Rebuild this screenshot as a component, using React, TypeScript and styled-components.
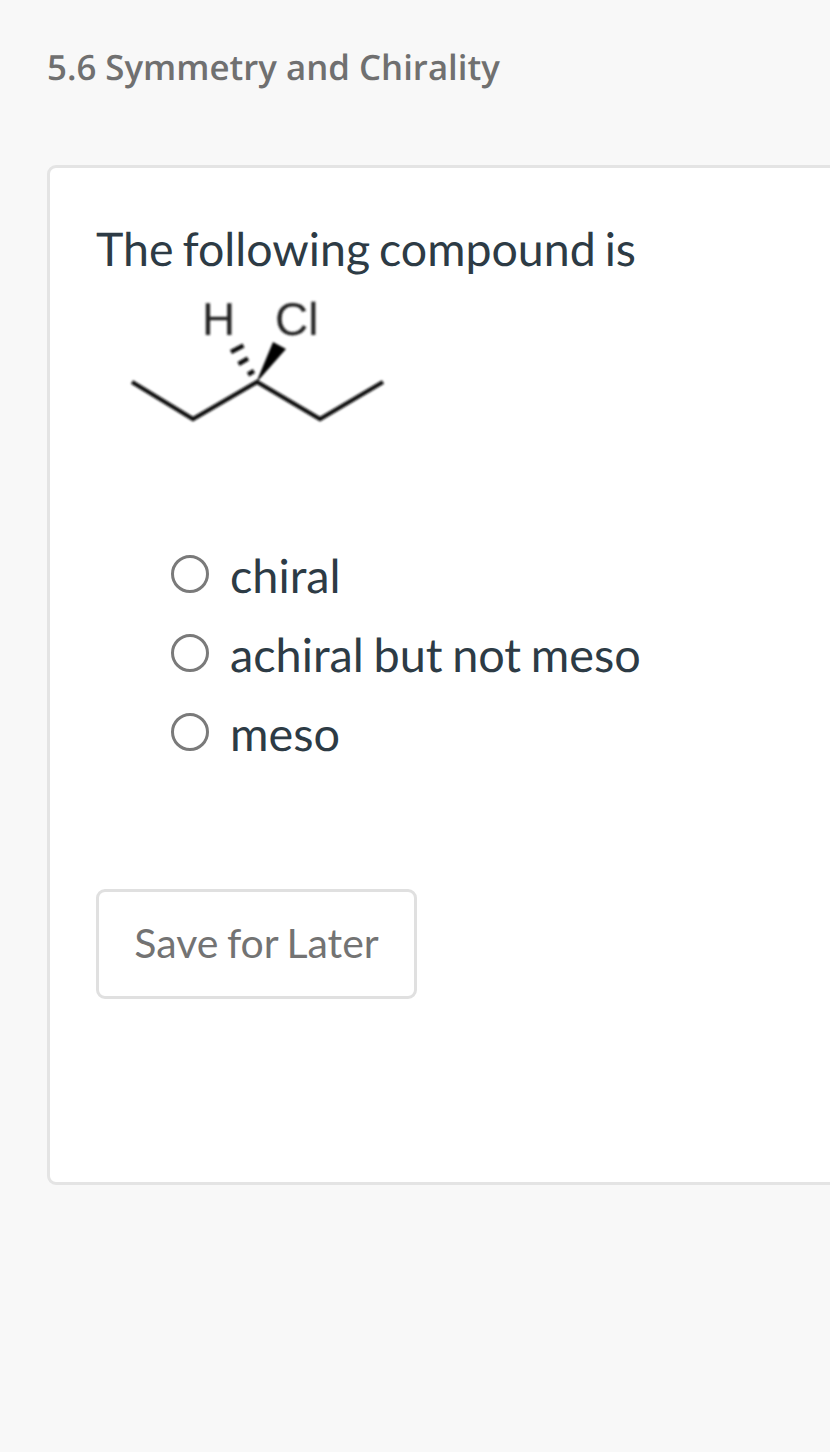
import React from 'react'
import styled, { createGlobalStyle } from 'styled-components'

const GlobalStyle = createGlobalStyle`
    html, body {
        margin: 0;
        padding: 0;
        background-color: #f8f8f8;
    }
    body {
        font-family: Lato, "Open Sans", sans-serif;
        text-rendering: geometricPrecision;
    }
`;

const Page = styled.div`
    width: 830px;
    height: 1452px;
    overflow: hidden;
    box-sizing: border-box;
    padding: 47px 0 0 47px;
    background-color: #f8f8f8;
`;

const SectionTitle = styled.h1`
    margin: 0;
    height: 42px;
    line-height: 42px;
    font-family: "Open Sans", sans-serif;
    font-size: 34.8px;
    font-weight: 600;
    color: #707070;
`;

const Card = styled.div`
    box-sizing: border-box;
    margin-top: 76px;
    width: 820px;
    height: 1020px;
    padding: 52px 46px;
    background-color: #fff;
    border: 3px solid #e4e4e4;
    border-radius: 9px;
`;

const Question = styled.p`
    margin: 0;
    line-height: 56px;
    font-size: 46.5px;
    word-spacing: -3px;
    color: #2d3b45;
`;

const Molecule = styled.svg`
    display: block;
    margin: 14px 0 0 32px;
`;

const Options = styled.div`
    display: flex;
    flex-direction: column;
    gap: 19px;
    margin: 120px 0 0 75px;
`;

const Option = styled.label`
    display: flex;
    align-items: center;
    gap: 21px;
    height: 60px;
    font-size: 46.8px;
    word-spacing: -2.4px;
    color: #2d3b45;
`;

const OptionText = styled.span`
    margin-top: 1px;
`;

const Radio = styled.span`
    box-sizing: border-box;
    width: 38px;
    height: 38px;
    border: 3px solid #7a7a7a;
    border-radius: 50%;
    background-color: #fff;
`;

const SaveButton = styled.button`
    display: block;
    box-sizing: border-box;
    margin-top: 127px;
    width: 321px;
    height: 110px;
    padding: 0 0 3px;
    background-color: #fff;
    border: 3px solid #e0e0e0;
    border-radius: 9px;
    font-family: inherit;
    font-size: 41px;
    word-spacing: -2px;
    color: #737373;
`;

const options = ['chiral', 'achiral but not meso', 'meso']

// viewBox is in page pixels so the points read straight off the reference
const CompoundDrawing = () => (
    <Molecule width="260" height="134" viewBox="128 290 260 134">
        <defs>
            <filter id="soft">
                <feGaussianBlur stdDeviation="0.8" />
            </filter>
        </defs>
        <g filter="url(#soft)">
            <text x="202" y="335" fontFamily="Liberation Sans, sans-serif" fontSize="46" fill="#222">H</text>
            <text x="275" y="335" fontFamily="Liberation Sans, sans-serif" fontSize="46" fill="#222">Cl</text>
            <polyline points="132,382 193,419 257,382 320,419 383,382" fill="none" stroke="#111" strokeWidth="4.2" strokeLinejoin="miter" />
            <polygon points="256,383 273,342 286,349" fill="#000" />
            <path d="M243.5 345.5 L231 352 M248 358.5 L238.5 364 M254 371 L248 374.5" stroke="#111" strokeWidth="4.4" fill="none" />
        </g>
    </Molecule>
)

const App = () => {
    return (
        <Page>
            <GlobalStyle />
            <SectionTitle>5.6 Symmetry and Chirality</SectionTitle>
            <Card>
                <Question>The following compound is</Question>
                <CompoundDrawing />
                <Options>
                    {options.map((o) => (
                        <Option key={o}>
                            <Radio />
                            <OptionText>{o}</OptionText>
                        </Option>
                    ))}
                </Options>
                <SaveButton>Save for Later</SaveButton>
            </Card>
        </Page>
    )
}

export default App
